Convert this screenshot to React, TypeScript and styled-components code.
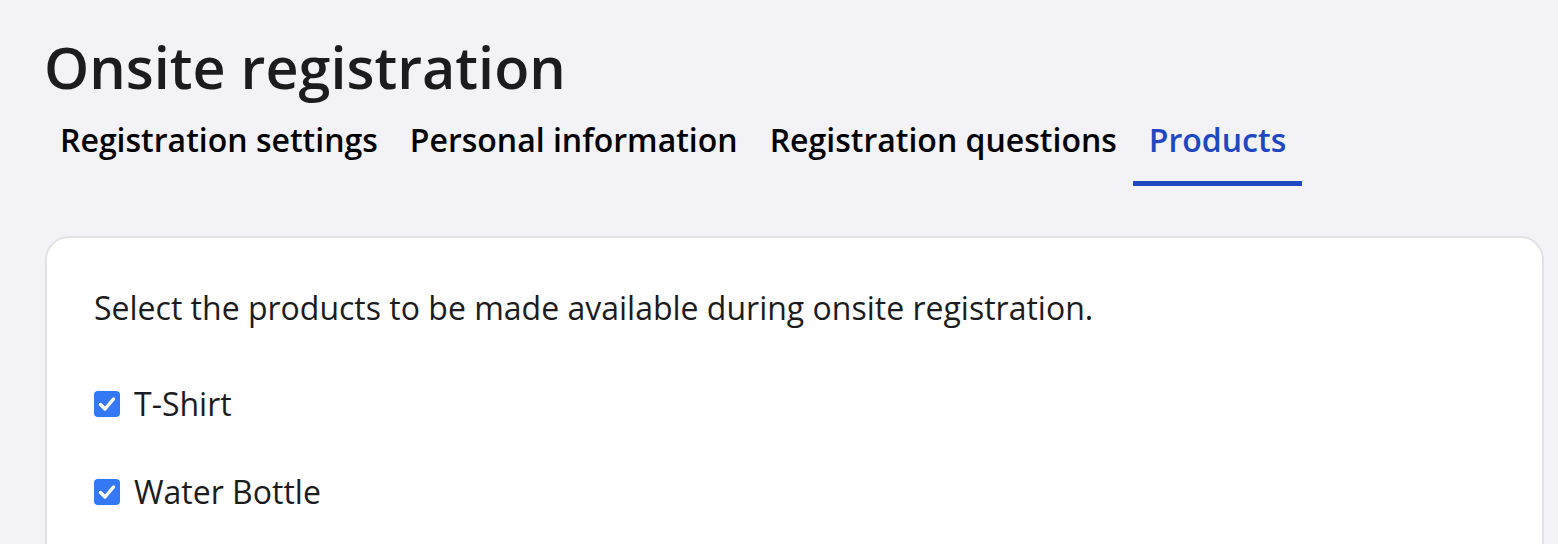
import styled, { createGlobalStyle } from "styled-components";

const GlobalStyle = createGlobalStyle`
  html, body {
    margin: 0;
    padding: 0;
    background: #f3f2f7;
    font-family: "Open Sans", "Liberation Sans", sans-serif;
    color: #1c1c1e;
  }
`;

const tabs = [
  "Registration settings",
  "Personal information",
  "Registration questions",
  "Products",
];

const products = ["T-Shirt", "Water Bottle"];

const CheckIcon = () => (
  <svg width="26" height="26" viewBox="0 0 26 26">
    <rect x="0" y="0" width="26" height="26" rx="4" fill="#3478f6" />
    <path
      d="M6.5 13.5 L11 18 L19.5 8"
      fill="none"
      stroke="#ffffff"
      strokeWidth="3.4"
      strokeLinecap="round"
      strokeLinejoin="round"
    />
  </svg>
);

const App = () => {
  return (
    <>
      <GlobalStyle />
      <Page>
        <Title>Onsite registration</Title>
        <TabBar>
          {tabs.map((t) => (
            <Tab key={t} active={t === "Products"}>
              {t}
            </Tab>
          ))}
        </TabBar>
        <Card>
          <Intro>
            Select the products to be made available during onsite registration.
          </Intro>
          {products.map((p) => (
            <ProductRow key={p}>
              <CheckIcon />
              <span>{p}</span>
            </ProductRow>
          ))}
        </Card>
      </Page>
    </>
  );
};

const Page = styled.div`
  padding: 28px 14px 0 44px;
`;

const Title = styled.h1`
  margin: 0;
  font-size: 57.5px;
  font-weight: 600;
  line-height: 78px;
  color: #1c1c1e;
`;

const TabBar = styled.div`
  display: flex;
  margin-top: 2px;
`;

const Tab = styled.div<{ active?: boolean }>`
  padding: 10px 16px 19px;
  font-size: 32px;
  font-weight: 600;
  line-height: 44px;
  color: ${({ active }) => (active ? "#1e47c0" : "#000000")};
  border-bottom: 5px solid
    ${({ active }) => (active ? "#1e47c0" : "transparent")};
`;

const Card = styled.div`
  margin: 50px 0 0 1px;
  background: #ffffff;
  border: 2px solid #e2e2e6;
  border-radius: 24px;
  padding: 50px 48px 60px 47px;
  min-height: 300px;
`;

const Intro = styled.p`
  margin: 0 0 56px;
  font-size: 32px;
  line-height: 40px;
  color: #1c1c1e;
`;

const ProductRow = styled.label`
  display: flex;
  align-items: center;
  gap: 14px;
  font-size: 32px;
  line-height: 40px;
  color: #1c1c1e;
  margin-bottom: 48px;
`;

export default App;
